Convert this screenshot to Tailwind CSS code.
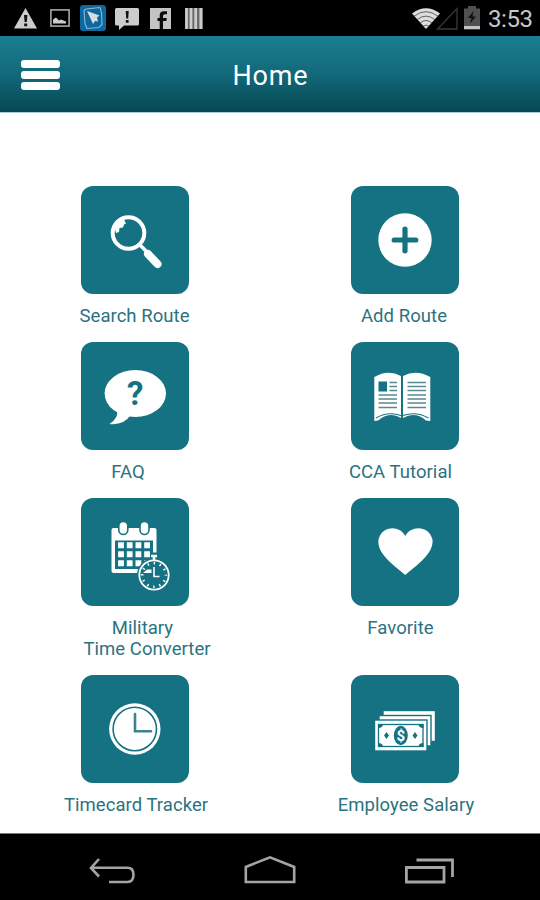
<!DOCTYPE html>
<html lang="en">
<head>
  <meta charset="UTF-8" />
  <meta name="viewport" content="width=device-width,initial-scale=1.0"/>
  <title>Home</title>
  <script src="https://cdn.jsdelivr.net/npm/@tailwindcss/browser@4"></script>
</head>
<body class="bg-white w-[540px] h-[900px] overflow-hidden flex flex-col font-['Roboto',sans-serif]">

  <!-- Status bar -->
  <div class="h-9 shrink-0 bg-black flex items-center justify-between pl-[14px] pr-[9px]">
    <div class="flex items-center">
      <svg class="w-[23px] h-[21px]" viewBox="0 0 23 21">
        <path d="M11.5 0 23 20.5H0Z" fill="#ccc"/>
        <path d="M10 7h3.4l-.6 7h-2.2ZM10.2 15.5h3v2.7h-3Z" fill="#111"/>
      </svg>
      <svg class="w-5 h-[18px] ml-[13px]" viewBox="0 0 20 18">
        <rect x=".9" y=".9" width="18.2" height="16.2" fill="none" stroke="#a8a8a8" stroke-width="1.6"/>
        <path d="M3 14.5v-4l3-2 3 3 2-1 5 2v2Z" fill="#ccc"/>
      </svg>
      <svg class="w-[26px] h-[26px] ml-[10px]" viewBox="0 0 26 26">
        <rect width="26" height="26" rx="3" fill="#0c69a0"/>
        <path d="M4 5.5 6 4l14-1.5 1.5 5 .5 12-3 3-12 1-2-5Z" fill="none" stroke="#8fb4cf" stroke-width="1.1"/>
        <path d="M7 6l12.5 4.5-2.5 2 1 4-3-.5-2 3Z" fill="#d8dce2"/>
      </svg>
      <svg class="w-6 h-[22px] ml-[9px] mt-[1px]" viewBox="0 0 24 22">
        <path d="M1.5 0h21q1.5 0 1.5 1.5v14.5q0 1.5-1.5 1.5H9L4 22v-4.5H1.5Q0 17.5 0 16V1.5Q0 0 1.5 0Z" fill="#ccc"/>
        <path d="M10.7 3h3l-.5 7.5h-2ZM10.8 12h2.8v2.7h-2.8Z" fill="#111"/>
      </svg>
      <svg class="w-[21px] h-[21px] ml-[11px]" viewBox="0 0 21 21">
        <rect width="21" height="21" fill="#c4c4c4"/>
        <path d="M13 21v-8h3.3l.5-3H13V8q0-1.7 1.7-1.7H17V3.2h-3.2Q9.7 3.2 9.7 7.3V10H7.5v3h2.2v8Z" fill="#0a0a0a"/>
      </svg>
      <svg class="w-[18px] h-[21px] ml-[14px]" viewBox="0 0 18 21">
        <rect width="18" height="21" fill="#666"/>
        <path d="M1.5 0v21M6 0v21M10.7 0v21M15.8 0v21" stroke="#ccc" stroke-width="2.8"/>
      </svg>
    </div>
    <div class="flex items-center">
      <svg class="w-7 h-[21px]" viewBox="0 0 28 21">
        <path d="M0 5.5Q14-5 28 5.5L14 21Z" fill="#ddd"/>
        <path d="M2 8.3Q14-1 26 8.3M5 11.7Q14 4.5 23 11.7M8 15Q14 10 20 15M11 18.2Q14 16 17 18.2" fill="none" stroke="#555" stroke-width=".9"/>
      </svg>
      <svg class="w-[22px] h-[23px] -ml-[4px]" viewBox="0 0 22 23">
        <path d="M21 1.5V22H1.5Z" fill="none" stroke="#383838" stroke-width="1.3"/>
      </svg>
      <svg class="w-4 h-6 ml-[6px]" viewBox="0 0 16 24">
        <path d="M4 0h8v2.5h4V20H0V2.5h4Z" fill="#505050"/>
        <rect y="20" width="16" height="3.3" fill="#c4c4c4"/>
        <path d="M9.5 5 4 12h3.5L6 17.5l6-7H8.5Z" fill="#111"/>
      </svg>
      <span class="ml-2 w-[43px] text-[24px] leading-9 text-[#c8c8c8] whitespace-nowrap tracking-[-0.4px] pt-[1px]">3:53</span>
    </div>
  </div>

  <!-- Header -->
  <header class="relative h-[77px] shrink-0 bg-linear-to-b from-[#1b7e91] via-[#12697a] to-[#064853] border-b border-[#a9cdd4] flex items-center justify-center">
    <button class="absolute left-[21px] top-6 w-[39px] flex flex-col gap-[3px]">
      <span class="h-[7.5px] rounded-[3px] bg-white"></span>
      <span class="h-[8px] rounded-[3px] bg-white"></span>
      <span class="h-[8px] rounded-[3px] bg-white"></span>
    </button>
    <h1 class="text-[27px] leading-8 font-normal text-white tracking-[0.8px] pt-[4px] pl-[1px]">Home</h1>
  </header>

  <!-- Menu -->
  <main class="flex-1 min-h-0 pt-[73px] grid grid-cols-2 content-start text-[18.5px] leading-[21px] tracking-[0.05px] text-[#2b7380] text-center">

    <a class="flex flex-col items-center pb-[15px]">
      <svg class="w-[108px] h-[108px] rounded-xl bg-[#157282]" viewBox="0 0 108 108">
        <circle cx="47.5" cy="47" r="15.8" fill="none" stroke="#fff" stroke-width="4"/>
        <path d="M34 43.500q1-8 9-10l2 4-2 1-1 3-3.500.5-.5 4-3 1Z" fill="#fff"/>
        <path d="M59 59l8 8" stroke="#fff" stroke-width="3.5"/>
        <path d="M67 68l9.500 10" stroke="#fff" stroke-width="8" stroke-linecap="round"/>
      </svg>
      <span class="mt-3 pr-[1px]">Search Route</span>
    </a>

    <a class="flex flex-col items-center pb-[15px]">
      <svg class="w-[108px] h-[108px] rounded-xl bg-[#157282]" viewBox="0 0 108 108">
        <circle cx="54" cy="54" r="26.7" fill="#fff"/>
        <path d="M54 43.200v21.600M43.200 54h21.600" stroke="#157282" stroke-width="5.2" stroke-linecap="round"/>
      </svg>
      <span class="mt-3 pr-[2px]">Add Route</span>
    </a>

    <a class="flex flex-col items-center pb-[15px]">
      <svg class="w-[108px] h-[108px] rounded-xl bg-[#157282]" viewBox="0 0 108 108">
        <ellipse cx="54.3" cy="51.5" rx="30.7" ry="23.500" fill="#fff"/>
        <path d="M36 68.500q2 7-7.500 13.500Q43 83.500 50 72.500Z" fill="#fff"/>
        <text x="54.3" y="63" font-size="33" font-weight="700" text-anchor="middle" fill="#157282" letter-spacing="0">?</text>
      </svg>
      <span class="mt-3 pr-[14px]">FAQ</span>
    </a>

    <a class="flex flex-col items-center pb-[15px]">
      <svg class="w-[108px] h-[108px] rounded-xl bg-[#157282]" viewBox="0 0 108 108">
        <path d="M23.3 35Q37 27 50 34V76q-11-7-23 2.500l-3.700.5ZM79.300 35Q65 27 52 34V76q12-7 23 2.500l4.300.5Z" fill="#fff"/>
        <path d="M25 76q12-7 25-2.500M77.500 76Q65 69 52 73.500" fill="none" stroke="#157282" stroke-width="1.100"/>
        <rect x="27.5" y="39.500" width="8.500" height="10" fill="#157282"/>
        <path d="M38.500 40.500H46M38.500 44.500H46M38.500 48.500H46M27.500 53H46M27.500 57H46M27.500 61H46M27.500 65.500H46" stroke="#5b8992" stroke-width="1.700"/>
        <path d="M56.500 40.500H75M56.500 44.500H75M56.500 48.500H75M56.500 53H75M56.500 57H75M56.500 61H75M56.500 65.500H75" stroke="#5b8992" stroke-width="1.700"/>
      </svg>
      <span class="mt-3 pr-[9px]">CCA Tutorial</span>
    </a>

    <a class="flex flex-col items-center pb-[15px]">
      <svg class="w-[108px] h-[108px] rounded-xl bg-[#157282]" viewBox="0 0 108 108">
        <rect x="30.5" y="30" width="45" height="45" rx="2" fill="#fff"/>
        <rect x="34" y="42.500" width="38" height="28.500" fill="#157282"/>
        <g fill="#fff" stroke="#157282" stroke-width="1.600">
          <rect x="37.800" y="23.500" width="9" height="13" rx="4.500"/>
          <rect x="59" y="23.500" width="9" height="13" rx="4.500"/>
        </g>
        <path d="M40 44.300v24.500M48.700 44.300v24.500M57.400 44.300v24.500M66.100 44.300v24.500" stroke="#fff" stroke-width="5.800" stroke-dasharray="6 3"/>
        <circle cx="73" cy="77" r="17" fill="#157282"/>
        <path d="M69 54.500h8v6h-8z" fill="#157282"/>
        <path d="M70 58h6M73 58v5" stroke="#fff" stroke-width="2.500"/>
        <circle cx="73" cy="77" r="14.700" fill="none" stroke="#fff" stroke-width="1.800"/>
        <circle cx="73" cy="77" r="11.800" fill="none" stroke="#fff" stroke-width="2.600" stroke-dasharray="1.400 4.779" stroke-dashoffset=".7"/>
        <path d="M73 69v9.500h5.500" fill="none" stroke="#fff" stroke-width="1.600"/>
        <path d="M62 75l4-3.500h4.500V75Z" fill="#fff"/>
      </svg>
      <span class="mt-3 pl-[15px]">Military</span>
      <span class="pl-6">Time Converter</span>
    </a>

    <a class="flex flex-col items-center pb-[15px]">
      <svg class="w-[108px] h-[108px] rounded-xl bg-[#157282]" viewBox="0 0 108 108">
        <path d="M54.300 38C49 27 31 27 27.500 41.500 25.500 55.500 42 66.500 54.300 77 66.500 66.500 83 55.500 81.500 41.500 78 27 59.500 27 54.300 38Z" fill="#fff"/>
      </svg>
      <span class="mt-3 pr-[9px]">Favorite</span>
    </a>

    <a class="flex flex-col items-center">
      <svg class="w-[108px] h-[108px] rounded-xl bg-[#157282]" viewBox="0 0 108 108">
        <circle cx="53.800" cy="54" r="25.700" fill="#fff"/>
        <circle cx="53.800" cy="54" r="21.700" fill="none" stroke="#157282" stroke-width="1.600"/>
        <path d="M54 39v17.200h16" fill="none" stroke="#3c8390" stroke-width="2.600" stroke-linecap="round"/>
      </svg>
      <span class="mt-3 pl-[2px]">Timecard Tracker</span>
    </a>

    <a class="flex flex-col items-center">
      <svg class="w-[108px] h-[108px] rounded-xl bg-[#157282]" viewBox="0 0 108 108">
        <g fill="#fff" stroke="#157282" stroke-width="1.400">
          <rect x="32" y="35.500" width="52.500" height="31"/>
          <rect x="28" y="40.500" width="52" height="30.500"/>
          <rect x="23.500" y="45" width="52.500" height="31"/>
        </g>
        <rect x="27.500" y="49.500" width="44.500" height="22" fill="none" stroke="#157282" stroke-width="1.300"/>
        <path d="M27 49h5q0 4-5 4ZM72.500 49h-5q0 4 5 4ZM27 72h5q0-4-5-4ZM72.500 72h-5q0-4 5-4ZM35.500 57l2.500 3.500-2.500 3.500-2.500-3.500ZM64 57l2.500 3.500L64 64l-2.500-3.500Z" fill="#157282"/>
        <ellipse cx="49.800" cy="60.500" rx="7" ry="9.700" fill="#157282"/>
        <text x="49.800" y="65.800" font-size="15" font-weight="700" text-anchor="middle" fill="#fff" letter-spacing="0">$</text>
      </svg>
      <span class="mt-3 pl-[2px]">Employee Salary</span>
    </a>
  </main>

  <!-- Navigation bar -->
  <nav class="h-[67px] shrink-0 bg-black border-t border-[#777] flex items-center justify-between pt-[3px] pl-[87px] pr-[85px]">
    <svg class="w-12 h-8" viewBox="0 0 48 32" fill="none" stroke="#a4a4a4" stroke-width="2.600">
      <path d="M12 6 4 15l8 8.500M4 14.700h36.500q6 0 6 7t-6 7.300H22"/>
    </svg>
    <svg class="w-[52px] h-8" viewBox="0 0 52 32" fill="none" stroke="#a4a4a4" stroke-width="2.600">
      <path d="M1.800 29V14L26 4.300 50.200 14v15Z"/>
    </svg>
    <svg class="w-[50px] h-8" viewBox="0 0 50 32" fill="none" stroke="#a4a4a4" stroke-width="2.800">
      <path d="M1.400 14.500H39V29H1.400ZM11.500 7h36v17"/>
    </svg>
  </nav>
</body>
</html>
